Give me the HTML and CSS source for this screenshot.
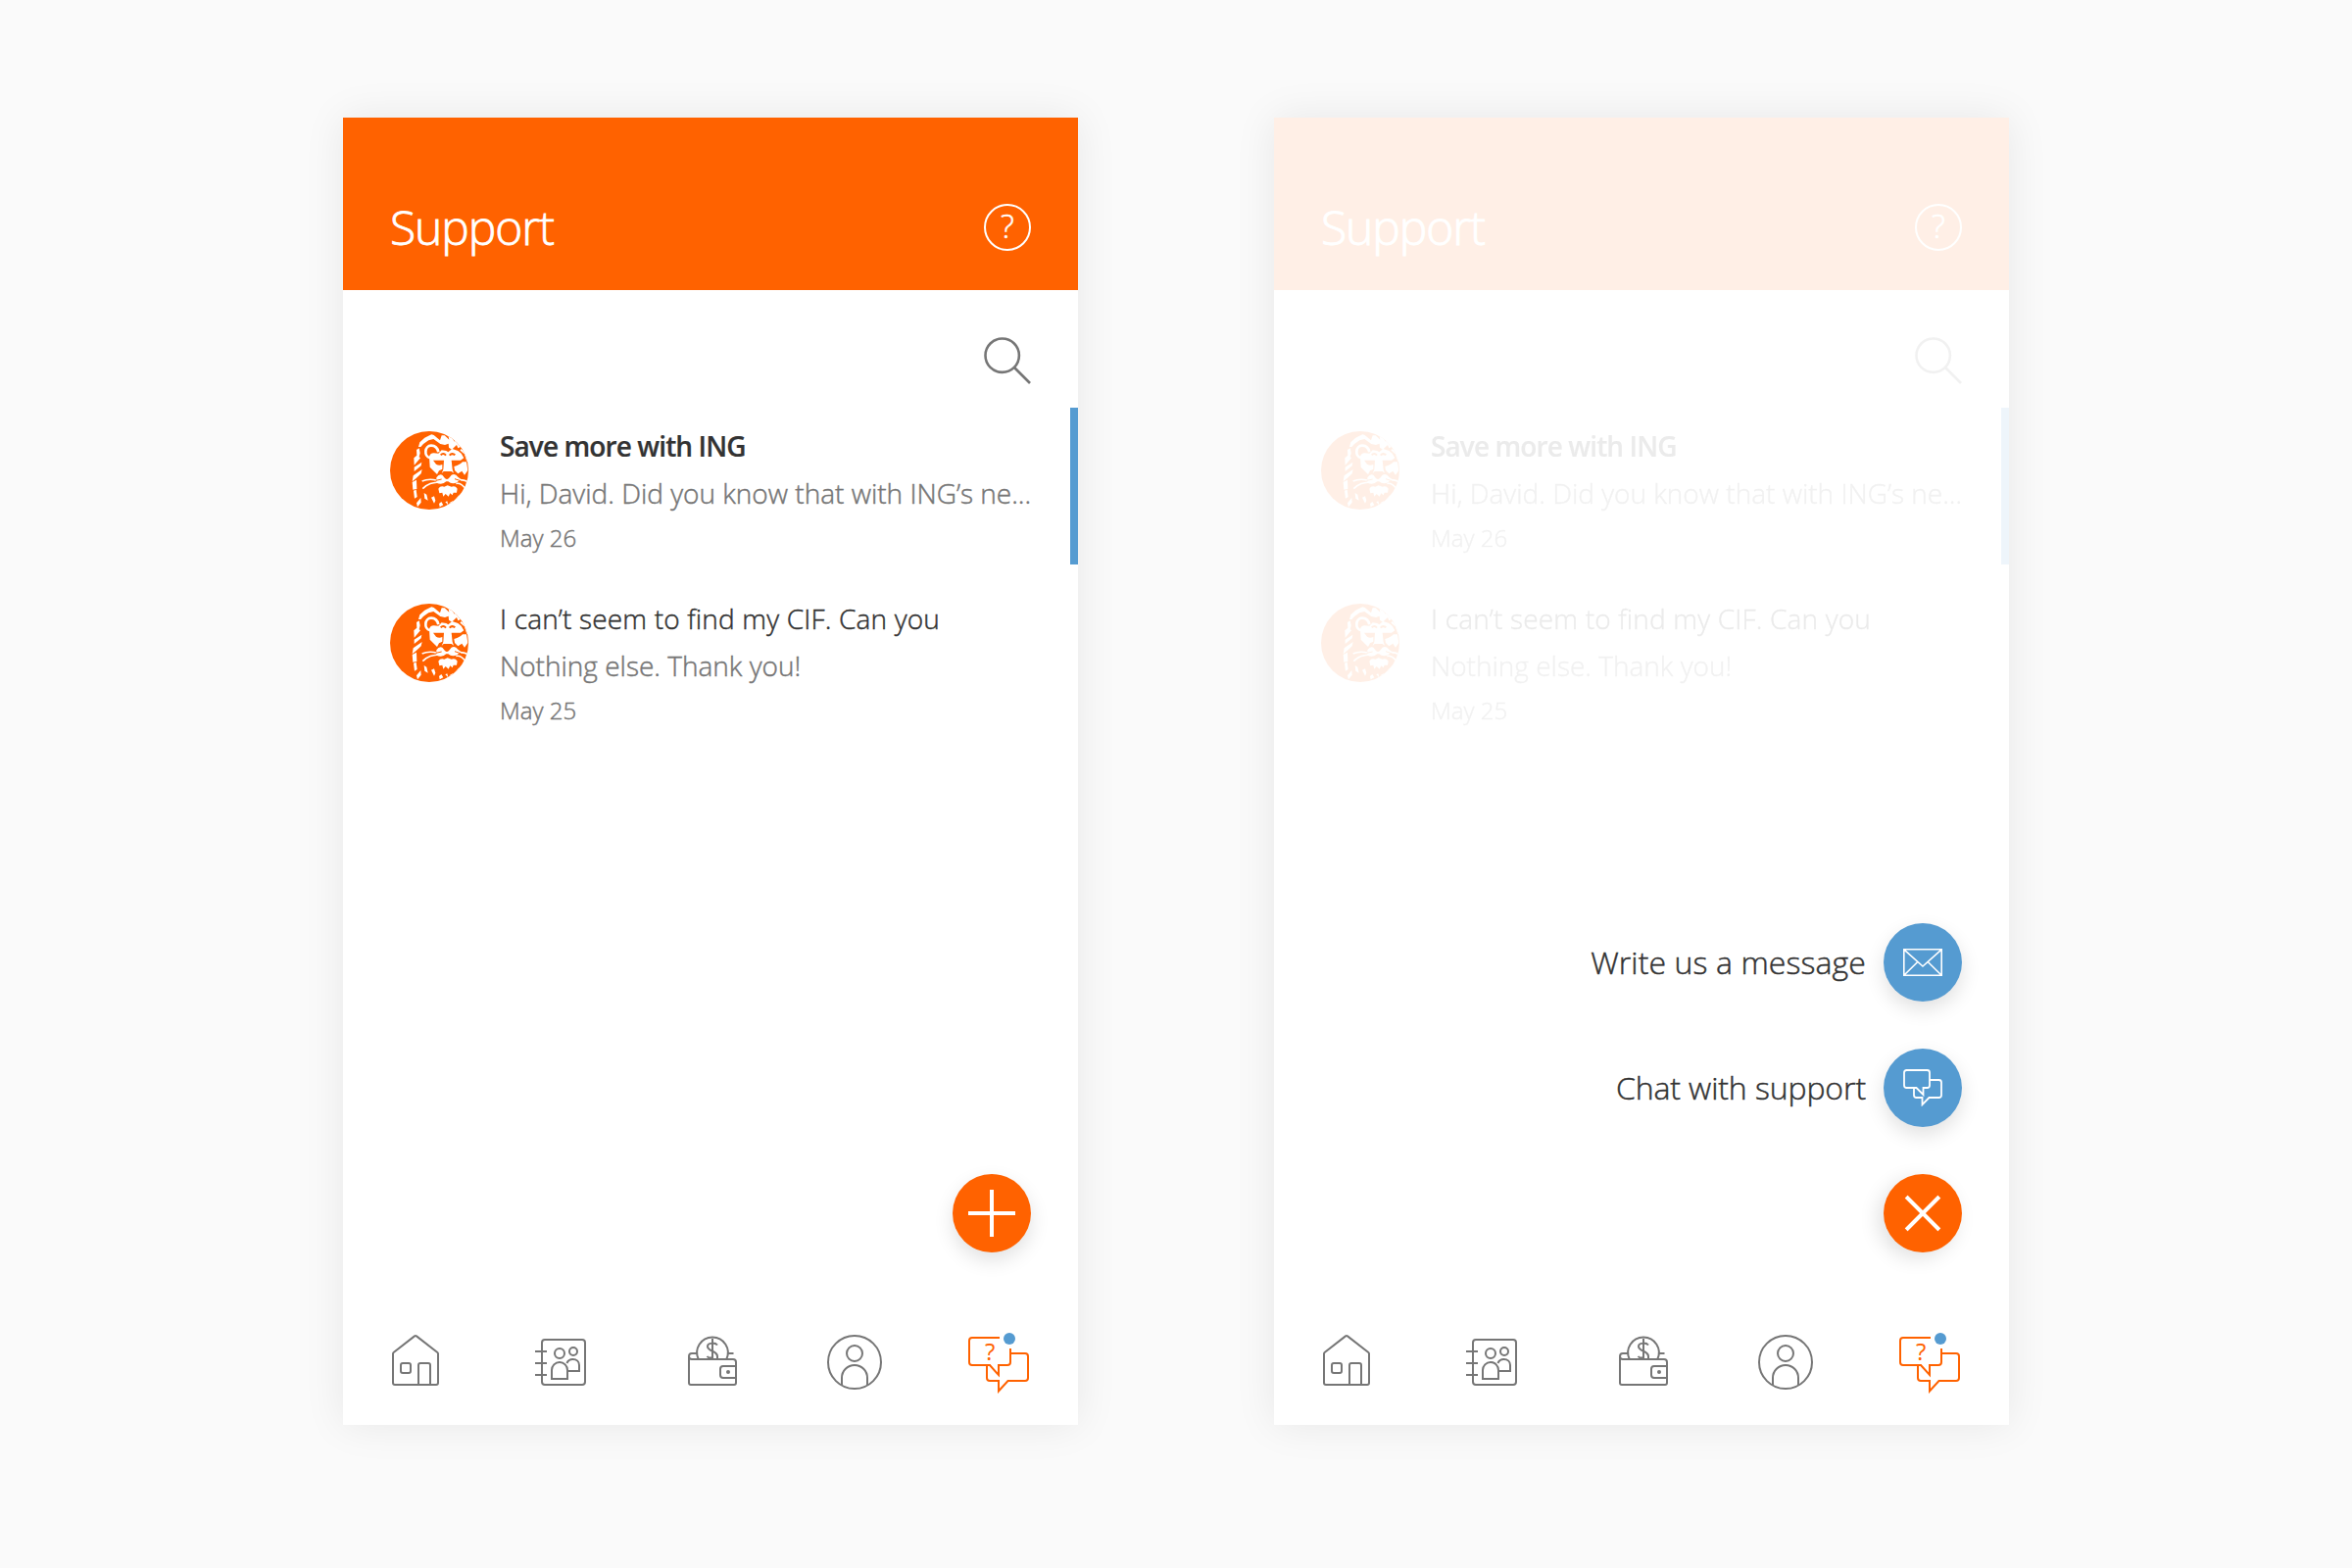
FILE: index.html
```html
<!DOCTYPE html>
<html lang="en">
<head>
<meta charset="utf-8">
<title>Support</title>
<link rel="stylesheet" href="styles.css">
</head>
<body>
<svg class="sprite" aria-hidden="true">
  <symbol id="search" viewBox="0 0 48 48">
    <g fill="none" stroke="#767676" stroke-width="2.6">
      <circle cx="18.7" cy="18.7" r="17.2"/>
      <path d="M31 31 47 47"/>
    </g>
  </symbol>
  <symbol id="lion" viewBox="24 30 240 240">
    <clipPath id="disc"><circle cx="144" cy="150" r="120"/></clipPath>
    <g clip-path="url(#disc)">
      <rect x="24" y="30" width="240" height="240" fill="#ff6200"/>
      <g fill="#fff">
        <path d="M111 78 115 64 130 50 151 40 158 42 177 58 182 43 191 43 205 56 200 32 211 36 220 62 226 46 234 56 236 66 250 62 252 72 232 82 228 72 213 86 204 80 203 68 192 72 178 69 157 54 142 58 126 69 118 78Z"/>
        <path d="M105 87 113 82 116 97 113 109 117 112 98 134 97 112 106 104ZM98 140 121 125 119 136 98 153ZM92 184 95 166 122 147 119 160 104 174ZM92 186 105 179 106 207 94 209ZM96 212 104 209 107 231 99 236ZM105 250 118 234 119 248 108 262ZM128 219 136 224 140 242 130 236ZM150 233 159 229 163 242 159 251ZM174 252 181 246 187 256 176 262ZM193 247 199 244 202 256ZM221 242 236 224 234 240 222 254ZM205 250 217 243 215 256Z"/>
        <path d="M144 108Q146 98 158 97L172 98 182 88 196 90 202 94 214 84 232 90 242 98 250 112 240 119H212L215 147 219 158 212 153H188L182 159 187 147 189 119H156L165 131Q174 137 184 132L184 146 174 151 168 162 158 152 146 140Z"/>
        <path d="M258 124 262 150 252 164 244 152 232 160 222 150 220 138Q240 132 246 124Z"/>
        <path d="M166 172Q174 160 184 164L192 174Q198 180 204 174L212 164Q224 158 232 170L240 176 230 186Q214 194 202 184L196 184Q184 196 166 188Z"/>
        <path d="M172 206Q178 196 190 200L200 196 212 200Q224 196 230 206L228 218 218 218 215 226 208 220 203 230 194 222 187 230 184 218 175 220Z"/>
      </g>
      <path d="M147 112C126 106 130 74 150 74C163 74 170 84 172 94" fill="none" stroke="#fff" stroke-width="8"/>
      <path d="M179 103Q187 95 195 104M206 104Q214 95 223 103" fill="none" stroke="#ff6200" stroke-width="6"/>
      <path d="M240 86 254 98 262 122" fill="none" stroke="#fff" stroke-width="6"/>
      <path d="M122 183C138 176 148 176 166 180M124 206C140 190 154 188 172 186M232 180C243 176 254 181 266 186M226 190C238 188 247 195 254 206" fill="none" stroke="#fff" stroke-width="5"/>
      <path d="M164 181 182 177M222 176 240 182" fill="none" stroke="#ff6200" stroke-width="3"/>
    </g>
  </symbol>
  <symbol id="home" viewBox="0 0 48 52">
    <path class="line" d="M23 1.4Q24 .7 25 1.4L46.3 18Q47 18.6 47 19.5V49Q47 51 45 51H3Q1 51 1 49V19.5Q1 18.6 1.7 18ZM27 51V31Q27 29 29 29H37Q39 29 39 31V51"/>
    <rect class="line" x="9" y="29" width="10" height="10" rx="2"/>
  </symbol>
  <symbol id="contacts" viewBox="0 0 52 48">
    <g class="line">
      <rect x="7" y="1" width="44" height="46" rx="3"/>
      <path d="M0 13H12M0 25H12M0 37H12M17 41V32A8 8 0 0 1 33 32V41ZM32.4 25C33.5 22.5 35.5 21 38.5 21C42.5 21 45 23.7 45 27V33H33"/>
      <circle cx="25" cy="15" r="5"/>
      <circle cx="39" cy="13" r="4"/>
    </g>
  </symbol>
  <symbol id="wallet" viewBox="0 0 50 52">
    <g class="line">
      <path d="M9 19H4Q1 19 1 22Q1 25 4 25H46Q49 25 49 28V49Q49 51 47 51H3Q1 51 1 49V22M41 19H46.5M10.7 25A15.8 15.8 0 1 1 39.3 25M25 4V24M30 10.5C28 8 20 7.5 20 12C20 17 30 16 30 22V25M19.5 22Q21 24 25 23.5M49 32H36Q33 32 33 35V41Q33 44 36 44H49"/>
    </g>
    <circle cx="41" cy="38" r="2" fill="#767676"/>
  </symbol>
  <symbol id="user" viewBox="0 0 56 56">
    <g class="line">
      <circle cx="28" cy="28" r="27"/>
      <circle cx="28" cy="19" r="8"/>
      <path d="M15 51V44A13 13 0 0 1 41 44V51"/>
    </g>
  </symbol>
  <symbol id="mail" viewBox="0 0 40 28">
    <path d="M.8.8H39.2V27.2H.8ZM.8.8 20 18 39.2.8M.8 27.2 14.8 13.5M39.2 27.2 25.2 13.5" fill="none" stroke="#fff" stroke-width="1.6"/>
  </symbol>
  <symbol id="chat" viewBox="0 0 40 38">
    <path d="M3.5 1H24.5Q27 1 27 3.5V16.5Q27 19 24.5 19H20.5V26L13.5 19H3.5Q1 19 1 16.5V3.5Q1 1 3.5 1ZM27 11H36.5Q39 11 39 13.5V26.5Q39 29 36.5 29H26.5L19.5 36.2V29H13.5Q11 29 11 26.5V19" fill="none" stroke="#fff" stroke-width="1.8"/>
  </symbol>
</svg>

<main class="board">
  <section class="phone">
    <div class="content">
      <header class="header">
        <h1 class="title">Support</h1>
        <span class="help">?</span>
      </header>
      <div class="toolbar"><svg class="icon48"><use href="#search"/></svg></div>
      <ul class="list">
        <li class="item unread">
          <svg class="avatar"><use href="#lion"/></svg>
          <div class="body">
            <p class="subject strong">Save more with ING</p>
            <p class="preview">Hi, David. Did you know that with ING’s ne...</p>
            <p class="date">May 26</p>
          </div>
        </li>
        <li class="item">
          <svg class="avatar"><use href="#lion"/></svg>
          <div class="body">
            <p class="subject">I can’t seem to find my CIF. Can you</p>
            <p class="preview">Nothing else. Thank you!</p>
            <p class="date">May 25</p>
          </div>
        </li>
      </ul>
    </div>
    <div class="actions">
      <button class="fab fab-main" aria-label="New">
        <svg width="48" height="48" viewBox="0 0 48 48"><path d="M24 0V48M0 24H48" stroke="#fff" stroke-width="4"/></svg>
      </button>
    </div>
    <nav class="nav">
      <svg class="home"><use href="#home"/></svg>
      <svg class="contacts"><use href="#contacts"/></svg>
      <svg class="wallet"><use href="#wallet"/></svg>
      <svg class="user"><use href="#user"/></svg>
      <svg class="support" viewBox="0 0 62 62">
        <path class="bubbles" d="M32 5H4Q1 5 1 8V30Q1 33 4 33H22L31 43V33H40Q43 33 43 30V16M43 21H58Q61 21 61 24V46Q61 49 58 49H40.500L31 59.500V49H22Q19 49 19 46V33"/>
        <text class="mark" x="22.3" y="27.800">?</text>
        <circle class="badge" cx="42" cy="6" r="6"/>
      </svg>
    </nav>
  </section>

  <section class="phone">
    <div class="content faded">
      <header class="header">
        <h1 class="title">Support</h1>
        <span class="help">?</span>
      </header>
      <div class="toolbar"><svg class="icon48"><use href="#search"/></svg></div>
      <ul class="list">
        <li class="item unread">
          <svg class="avatar"><use href="#lion"/></svg>
          <div class="body">
            <p class="subject strong">Save more with ING</p>
            <p class="preview">Hi, David. Did you know that with ING’s ne...</p>
            <p class="date">May 26</p>
          </div>
        </li>
        <li class="item">
          <svg class="avatar"><use href="#lion"/></svg>
          <div class="body">
            <p class="subject">I can’t seem to find my CIF. Can you</p>
            <p class="preview">Nothing else. Thank you!</p>
            <p class="date">May 25</p>
          </div>
        </li>
      </ul>
    </div>
    <div class="actions">
      <div class="action">
        <span class="label">Write us a message</span>
        <button class="fab" aria-label="Message"><svg width="40" height="28"><use href="#mail"/></svg></button>
      </div>
      <div class="action">
        <span class="label label-chat">Chat with support</span>
        <button class="fab" aria-label="Chat"><svg width="40" height="38"><use href="#chat"/></svg></button>
      </div>
      <button class="fab fab-main fab-close" aria-label="Close">
        <svg width="48" height="48" viewBox="0 0 48 48"><path d="M24 0V48M0 24H48" stroke="#fff" stroke-width="4"/></svg>
      </button>
    </div>
    <nav class="nav">
      <svg class="home"><use href="#home"/></svg>
      <svg class="contacts"><use href="#contacts"/></svg>
      <svg class="wallet"><use href="#wallet"/></svg>
      <svg class="user"><use href="#user"/></svg>
      <svg class="support" viewBox="0 0 62 62">
        <path class="bubbles" d="M32 5H4Q1 5 1 8V30Q1 33 4 33H22L31 43V33H40Q43 33 43 30V16M43 21H58Q61 21 61 24V46Q61 49 58 49H40.500L31 59.500V49H22Q19 49 19 46V33"/>
        <text class="mark" x="22.3" y="27.800">?</text>
        <circle class="badge" cx="42" cy="6" r="6"/>
      </svg>
    </nav>
  </section>
</main>
</body>
</html>
```
FILE: styles.css
```css
* { box-sizing: border-box; margin: 0; padding: 0; }

body {
  background: #fafafa;
  color: #333;
  font-family: "Open Sans", "Noto Sans", sans-serif;
  font-weight: 300;
  -webkit-text-stroke: .45px currentColor;
}

.sprite { display: block; width: 0; height: 0; }
.line { fill: none; stroke: #767676; stroke-width: 2; }
.bubbles { fill: none; stroke: #ff6200; stroke-width: 2; }
.badge { fill: #559bd1; }
.mark { fill: #ff6200; font-size: 24px; font-weight: 400; text-anchor: middle; -webkit-text-stroke: 0; }

.board {
  display: flex;
  justify-content: center;
  gap: 200px;
  height: 1600px;
  padding-top: 120px;
}

.phone {
  display: flex;
  flex-direction: column;
  width: 750px;
  height: 1334px;
  background: #fff;
  box-shadow: 0 0 40px rgba(0, 0, 0, .08);
}

.faded { opacity: .1; }

.header {
  display: flex;
  justify-content: space-between;
  align-items: center;
  height: 176px;
  padding: 48px 48px 0;
  background: #ff6200;
}

.title {
  color: #fff;
  font-size: 48px;
  font-weight: 300;
  line-height: 48px;
  letter-spacing: -1.1px;
  -webkit-text-stroke-width: .8px;
}

.help {
  width: 48px;
  height: 48px;
  border: 2px solid #fff;
  border-radius: 50%;
  color: #fff;
  font-size: 33px;
  line-height: 42px;
  text-align: center;
}

.icon48 { width: 48px; height: 48px; overflow: visible; }

.toolbar {
  display: flex;
  justify-content: flex-end;
  padding: 48px 48px 24px;
}

.list { display: flex; flex-direction: column; gap: 16px; list-style: none; }

.item {
  display: flex;
  gap: 32px;
  height: 160px;
  padding-left: 48px;
  border-right: 8px solid transparent;
}
.unread { border-right-color: #559bd1; }

.avatar { width: 80px; height: 80px; margin-top: 24px; }

.body { padding-top: 15px; white-space: nowrap; }
.subject { font-size: 28px; line-height: 48px; letter-spacing: .17px; }
.strong { font-weight: 600; letter-spacing: -.9px; -webkit-text-stroke-width: .2px; }
.preview { color: #767676; font-size: 28px; line-height: 48px; }
.date { color: #767676; font-size: 24px; line-height: 44px; }

.actions {
  display: flex;
  flex-direction: column;
  align-items: flex-end;
  gap: 48px;
  margin-top: auto;
  padding-right: 48px;
}
.action { display: flex; align-items: center; gap: 18px; }
.label { font-size: 32px; line-height: 80px; letter-spacing: .1px; }
.label-chat { letter-spacing: -.1px; }

.fab {
  display: flex;
  align-items: center;
  justify-content: center;
  width: 80px;
  height: 80px;
  border: 0;
  border-radius: 50%;
  background: #559bd1;
  box-shadow: 0 8px 20px rgba(0, 0, 0, .12);
}
.fab-main { background: #ff6200; }
.fab-close { transform: rotate(45deg); }

.nav {
  display: grid;
  grid-template-columns: 146px 156px 142px 144px 62px;
  align-items: start;
  height: 176px;
  padding: 82px 50px 0;
}
.home { width: 48px; height: 52px; margin-top: 2px; }
.contacts { width: 52px; height: 48px; margin-top: 6px; }
.wallet { width: 50px; height: 52px; margin-top: 2px; }
.user { width: 56px; height: 56px; margin-top: 2px; }
.support { width: 62px; height: 62px; }
```
